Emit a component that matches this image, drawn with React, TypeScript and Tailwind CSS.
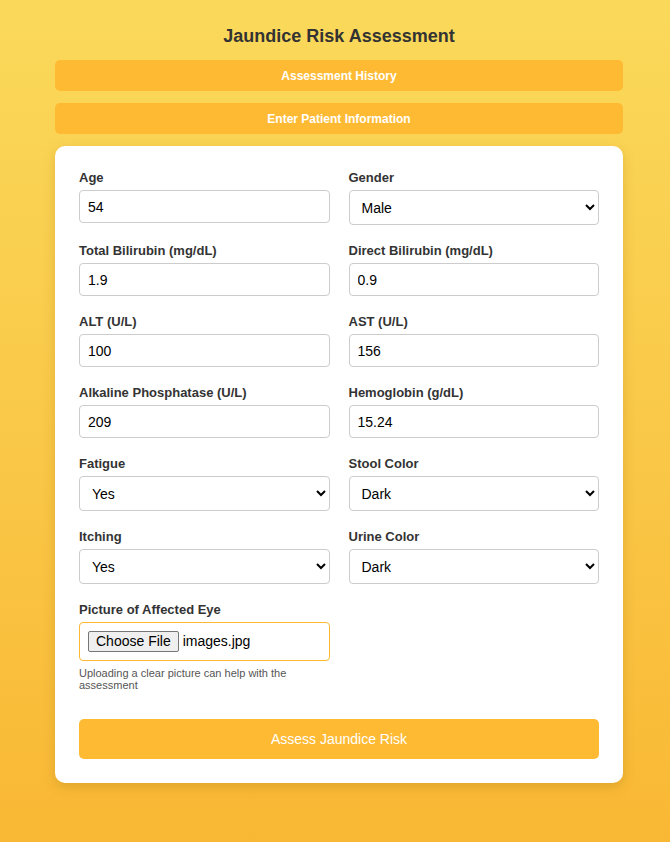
import { useState } from "react";

type Field = {
	id: string;
	label: string;
	kind: "input" | "select";
	value: string;
	options?: string[];
};

const fields: Field[] = [
	{ id: "age", label: "Age", kind: "input", value: "54" },
	{ id: "gender", label: "Gender", kind: "select", value: "Male", options: ["Male", "Female"] },
	{ id: "tbil", label: "Total Bilirubin (mg/dL)", kind: "input", value: "1.9" },
	{ id: "dbil", label: "Direct Bilirubin (mg/dL)", kind: "input", value: "0.9" },
	{ id: "alt", label: "ALT (U/L)", kind: "input", value: "100" },
	{ id: "ast", label: "AST (U/L)", kind: "input", value: "156" },
	{ id: "alp", label: "Alkaline Phosphatase (U/L)", kind: "input", value: "209" },
	{ id: "hgb", label: "Hemoglobin (g/dL)", kind: "input", value: "15.24" },
	{ id: "fatigue", label: "Fatigue", kind: "select", value: "Yes", options: ["Yes", "No"] },
	{ id: "stool", label: "Stool Color", kind: "select", value: "Dark", options: ["Normal", "Dark", "Pale"] },
	{ id: "itching", label: "Itching", kind: "select", value: "Yes", options: ["Yes", "No"] },
	{ id: "urine", label: "Urine Color", kind: "select", value: "Dark", options: ["Normal", "Dark"] },
];

export default function App() {
	const [values, setValues] = useState<Record<string, string>>(
		Object.fromEntries(fields.map((f) => [f.id, f.value]))
	);

	const update = (id: string, v: string) =>
		setValues((prev) => ({ ...prev, [id]: v }));

	return (
		<div className="min-h-screen bg-gradient-to-b from-[#fad95a] to-[#f9b834] pb-[58px] font-['Liberation_Sans',Arial,sans-serif]">
			<div className="mx-auto w-[576px] pt-6 pl-2">
				<h1 className="text-center text-[18px] leading-6 font-bold text-[#333]">
					Jaundice Risk Assessment
				</h1>

				<button className="mt-3 flex h-[31px] w-full items-center justify-center rounded-[5px] bg-[#ffba33] text-[12px] font-bold text-white">
					Assessment History
				</button>
				<button className="mt-3 flex h-[31px] w-full items-center justify-center rounded-[5px] bg-[#ffba33] text-[12px] font-bold text-white">
					Enter Patient Information
				</button>

				<form
					className="mt-[12px] rounded-[10px] bg-white px-6 pt-6 pb-6 shadow-[0_4px_12px_rgba(150,100,0,0.25)]"
					onSubmit={(e) => e.preventDefault()}
				>
					<div className="grid grid-cols-2 gap-x-[19px] gap-y-[18px]">
						{fields.map((f) => (
							<div key={f.id}>
								<label
									htmlFor={f.id}
									className="mb-1 block text-[13px] leading-4 font-bold text-[#333]"
								>
									{f.label}
								</label>
								{f.kind === "input" ? (
									<input
										id={f.id}
										value={values[f.id]}
										onChange={(e) => update(f.id, e.target.value)}
										className="block h-[33px] w-full rounded-[4px] border border-[#ccc] px-2 text-[14px] text-black outline-none"
									/>
								) : (
									<select
										id={f.id}
										value={values[f.id]}
										onChange={(e) => update(f.id, e.target.value)}
										className="block h-[35px] w-full rounded-[4px] border border-[#ccc] bg-white px-2 text-[14px] text-black outline-none"
									>
										{f.options?.map((o) => (
											<option key={o}>{o}</option>
										))}
									</select>
								)}
							</div>
						))}

						<div>
							<label className="mb-1 block text-[13px] leading-4 font-bold text-[#333]">
								Picture of Affected Eye
							</label>
							<div className="flex h-[39px] items-center rounded-[4px] border border-[#ffb833] px-2">
								<span className="flex h-[21px] items-center rounded-[2px] border border-[#767676] bg-[#efefef] px-[7px] text-[14px] text-black">
									Choose File
								</span>
								<span className="ml-1 text-[14px] text-black">images.jpg</span>
							</div>
							<p className="mt-[6px] pr-[30px] text-[11px] leading-[12px] text-[#555]">
								Uploading a clear picture can help with the assessment
							</p>
						</div>
					</div>

					<button
						type="submit"
						className="mt-[28px] flex h-10 w-full items-center justify-center rounded-[5px] bg-[#ffba33] text-[14px] text-white"
					>
						Assess Jaundice Risk
					</button>
				</form>
			</div>
		</div>
	);
}
